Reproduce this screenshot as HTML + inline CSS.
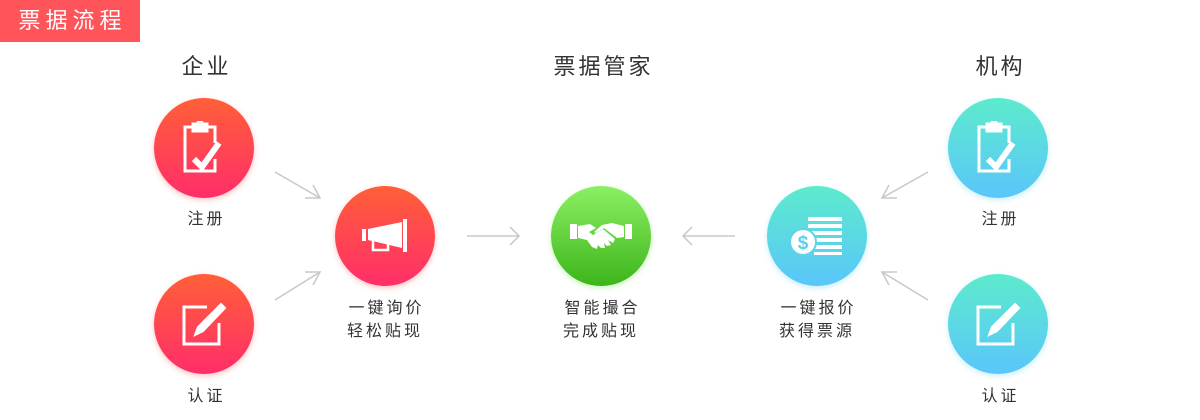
<!DOCTYPE html>
<html><head><meta charset="utf-8"><style>
body{margin:0;width:1200px;height:420px;background:#fff;position:relative;overflow:hidden;font-family:"Liberation Sans","Noto Sans CJK SC",sans-serif;color:#333}
.tag{position:absolute;left:0;top:0;width:140px;height:42px;background:#ff5459;color:#fff;font-size:22px;line-height:42px;text-align:center;letter-spacing:5px;text-indent:5px}
.h{position:absolute;top:49px;font-size:22px;color:#333;transform:translateX(-50%);letter-spacing:3px;text-indent:3px;white-space:nowrap}
.c{position:absolute;width:100px;height:100px;border-radius:50%;margin:-50px 0 0 -50px;display:flex;align-items:center;justify-content:center}
.r{background:linear-gradient(#ff5f38,#ff2e6a);box-shadow:0 2px 6px rgba(255,80,80,.35)}
.g{background:linear-gradient(#8cf064,#3cb51a);box-shadow:0 2px 6px rgba(100,220,60,.35)}
.b{background:linear-gradient(#5cebcc,#5ac6fa);box-shadow:0 2px 6px rgba(90,210,240,.35)}
.l{position:absolute;font-size:16px;line-height:23px;text-align:center;transform:translateX(-50%);white-space:nowrap;letter-spacing:3px;text-indent:3px;color:#333}
svg.a{position:absolute;left:0;top:0}
</style></head><body>
<div class="tag">票据流程</div>
<div class="h" style="left:205px">企业</div>
<div class="h" style="left:602px">票据管家</div>
<div class="h" style="left:999px">机构</div>
<svg class="a" width="1200" height="420" fill="none" stroke="#c8c8c8" stroke-width="1.5">
<path d="M275 172L320 198M305 198H320L313 185"/>
<path d="M275 300L320 272M313 285L320 272H305"/>
<path d="M467 236H519M510 227L519 236L510 245"/>
<path d="M735 236H683M692 227L683 236L692 245"/>
<path d="M928 172L882 198M897 198H882L889 185"/>
<path d="M928 300L882 272M889 285L882 272H897"/>
</svg>
<div class="c r" style="left:204px;top:148px"><svg width="44" height="54" viewBox="0 0 44 54" fill="none" stroke="#fff" stroke-width="3"><path d="M10 6H3V50H33V38"/><path d="M26 6H33V22"/><rect x="11" y="3" width="14" height="7" fill="#fff"/><circle cx="18" cy="2" r="2" fill="#fff"/><path d="M12 38L20 46L37 22" stroke-width="6"/></svg></div>
<div class="l" style="left:205px;top:208px">注册</div>
<div class="c r" style="left:204px;top:324px"><svg width="46" height="46" viewBox="0 0 46 46" fill="none" stroke="#fff" stroke-width="3"><path d="M26 6H3V43H38V22"/><path d="M40 3L44 7L22 30L14 34L17 26Z" fill="#fff" stroke-width="2"/></svg></div>
<div class="l" style="left:205px;top:385px">认证</div>
<div class="c r" style="left:385px;top:236px"><svg width="50" height="36" viewBox="0 0 50 36" fill="#fff"><rect x="2" y="11" width="4" height="12"/><path d="M8 11L42 4V30L8 22Z"/><rect x="43" y="1" width="4" height="33"/><path d="M13 22V32H28V25" fill="none" stroke="#fff" stroke-width="2.5"/></svg></div>
<div class="l" style="left:385px;top:297px">一键询价<br>轻松贴现</div>
<div class="c g" style="left:601px;top:236px"><svg width="62" height="36" viewBox="0 0 62 36" fill="#fff"><rect x="0" y="6" width="7" height="15"/><rect x="55" y="6" width="7" height="15"/><path d="M8 8L20 6L26 10L19 14L23 17L33 11L45 21L43 25L38 22L41 27L37 28L34 25L35 30L31 30L28 27L27 31L22 29L17 22L8 20Z"/><path d="M54 8L42 5L32 7L24 14L26 15L34 10L47 20L54 19Z"/></svg></div>
<div class="l" style="left:601px;top:297px">智能撮合<br>完成贴现</div>
<div class="c b" style="left:817px;top:236px"><svg width="54" height="40" viewBox="0 0 54 40" fill="#fff"><rect x="18" y="1" width="34" height="4"/><rect x="18" y="8" width="34" height="4"/><rect x="18" y="15" width="34" height="4"/><rect x="24" y="22" width="28" height="4"/><rect x="24" y="29" width="28" height="4"/><rect x="24" y="36" width="28" height="3"/><circle cx="13" cy="26" r="13" fill="#fff" stroke="#5cd4ec" stroke-width="2"/><text x="13" y="33" font-size="19" font-weight="bold" text-anchor="middle" fill="#5ad0ee" font-family="Liberation Sans">$</text></svg></div>
<div class="l" style="left:817px;top:297px">一键报价<br>获得票源</div>
<div class="c b" style="left:998px;top:148px"><svg width="44" height="54" viewBox="0 0 44 54" fill="none" stroke="#fff" stroke-width="3"><path d="M10 6H3V50H33V38"/><path d="M26 6H33V22"/><rect x="11" y="3" width="14" height="7" fill="#fff"/><circle cx="18" cy="2" r="2" fill="#fff"/><path d="M12 38L20 46L37 22" stroke-width="6"/></svg></div>
<div class="l" style="left:999px;top:208px">注册</div>
<div class="c b" style="left:998px;top:324px"><svg width="46" height="46" viewBox="0 0 46 46" fill="none" stroke="#fff" stroke-width="3"><path d="M26 6H3V43H38V22"/><path d="M40 3L44 7L22 30L14 34L17 26Z" fill="#fff" stroke-width="2"/></svg></div>
<div class="l" style="left:999px;top:385px">认证</div>
</body></html>
